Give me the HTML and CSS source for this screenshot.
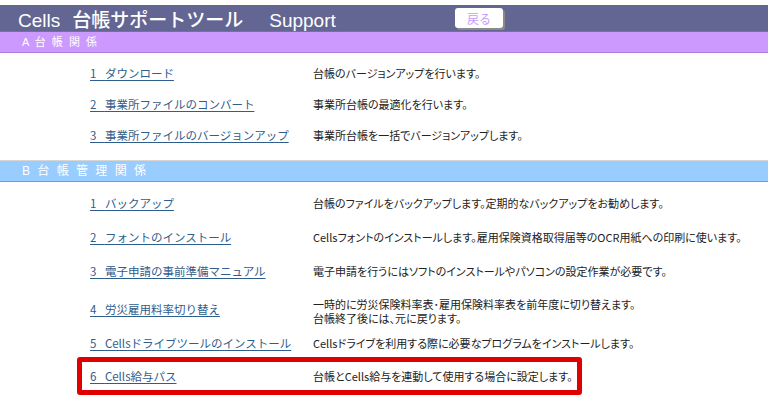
FILE: index.html
```html
<!DOCTYPE html>
<html lang="ja">
<head>
    <meta charset="UTF-8">
    <title>Cells 台帳サポートツール Support</title>
    <link rel="stylesheet" href="styles.css">
</head>
<body>
<div class="title-bar">
    <h1 class="title">Cells<span class="title-main">台帳サポートツール</span><span class="title-sub">Support</span></h1>
    <button class="btn-back" type="button">戻る</button>
</div>

<div class="section-bar section-bar--a">A 台 帳 関 係</div>
<ul class="menu menu--a">
    <li class="menu-row"><a class="menu-link" href="#"><span class="menu-no">1</span>ダウンロード</a><span class="menu-desc">台帳のバージョンアップを行います。</span></li>
    <li class="menu-row"><a class="menu-link" href="#"><span class="menu-no">2</span>事業所ファイルのコンバート</a><span class="menu-desc">事業所台帳の最適化を行います。</span></li>
    <li class="menu-row"><a class="menu-link" href="#"><span class="menu-no">3</span>事業所ファイルのバージョンアップ</a><span class="menu-desc">事業所台帳を一括でバージョンアップします。</span></li>
</ul>

<div class="section-bar section-bar--b">B 台 帳 管 理 関 係</div>
<ul class="menu menu--b">
    <li class="menu-row"><a class="menu-link" href="#"><span class="menu-no">1</span>バックアップ</a><span class="menu-desc">台帳のファイルをバックアップします。定期的なバックアップをお勧めします。</span></li>
    <li class="menu-row"><a class="menu-link" href="#"><span class="menu-no">2</span>フォントのインストール</a><span class="menu-desc">Cellsフォントのインストールします。雇用保険資格取得届等のOCR用紙への印刷に使います。</span></li>
    <li class="menu-row"><a class="menu-link" href="#"><span class="menu-no">3</span>電子申請の事前準備マニュアル</a><span class="menu-desc">電子申請を行うにはソフトのインストールやパソコンの設定作業が必要です。</span></li>
    <li class="menu-row menu-row--tall"><a class="menu-link" href="#"><span class="menu-no">4</span>労災雇用料率切り替え</a><span class="menu-desc">一時的に労災保険料率表･雇用保険料率表を前年度に切り替えます。<br>台帳終了後には、元に戻ります。</span></li>
    <li class="menu-row menu-row--short"><a class="menu-link" href="#"><span class="menu-no">5</span>Cellsドライブツールのインストール</a><span class="menu-desc">Cellsドライブを利用する際に必要なプログラムをインストールします。</span></li>
    <li class="menu-row menu-row--marked"><a class="menu-link" href="#"><span class="menu-no">6</span>Cells給与パス</a><span class="menu-desc">台帳とCells給与を連動して使用する場合に設定します。</span></li>
</ul>
</body>
</html>
```

FILE: styles.css
```css
body {
    margin: 0;
    background: #ffffff;
    font-family: "Liberation Sans", "Noto Sans CJK JP", sans-serif;
    color: #222222;
}

/* タイトル */
.title-bar {
    display: flex;
    align-items: center;
    margin-top: 5px;
    height: 26px;
    padding-left: 18px;
    background-color: #636693;
}

.title {
    margin: 0;
    width: 437px;
    font-size: 19px;
    font-weight: normal;
    color: #ffffff;
    white-space: nowrap;
}

.title-main {
    margin-left: 12px;
    font-weight: 500;
}

.title-sub {
    margin-left: 26px;
}

.btn-back {
    width: 48px;
    height: 20px;
    padding: 0;
    border: none;
    border-radius: 3px;
    background: #ffffff;
    box-shadow: 2px 2px 0 #8a8a8a;
    font-family: "Noto Sans CJK JP", sans-serif;
    font-size: 12px;
    color: #c79bf5;
}

/* 見出し */
.section-bar {
    height: 20px;
    line-height: 20px;
    padding-left: 22px;
    font-size: 11px;
    letter-spacing: 1.5px;
    color: #ffffff;
}

.section-bar--a {
    background-color: #cc99ff;
    border-top: 1px solid #9a55c8;
    border-bottom: 1px solid #b07ad8;
}

.section-bar--b {
    margin-top: 10px;
    font-size: 12px;
    letter-spacing: 2px;
    background-color: #99ccff;
    border-top: 1px solid #d6d6d6;
    border-bottom: 1px solid #6f9fd8;
}

/* メニュー */
.menu {
    margin: 0;
    padding: 4px 0 0 0;
    list-style: none;
}

.menu-row {
    display: flex;
    align-items: center;
    height: 31px;
    padding-left: 90px;
}

.menu--b .menu-row {
    height: 34px;
}

.menu--b .menu-row--tall {
    height: 45px;
}

.menu--b .menu-row--short {
    height: 20px;
}

.menu--b .menu-row--marked {
    width: 487px;
    height: 28px;
    margin: 4px 0 0 77px;
    padding-left: 8px;
    border: 5px solid #e00000;
    border-radius: 3px;
}

.menu-link {
    flex: 0 0 223px;
    font-family: "Noto Sans CJK JP", sans-serif;
    font-size: 11.5px;
    color: #2f5d8c;
    text-decoration: underline;
    text-underline-offset: 2px;
    white-space: nowrap;
}

/* 番号の後ろも下線を続ける */
.menu-no {
    letter-spacing: 8.5px;
}

.menu-row--tall .menu-link {
    margin-top: -4px;
}

.menu-desc {
    font-family: "Noto Sans CJK JP", sans-serif;
    font-size: 11px;
    line-height: 14px;
    font-feature-settings: "palt";
    color: #222222;
    white-space: nowrap;
}
```
